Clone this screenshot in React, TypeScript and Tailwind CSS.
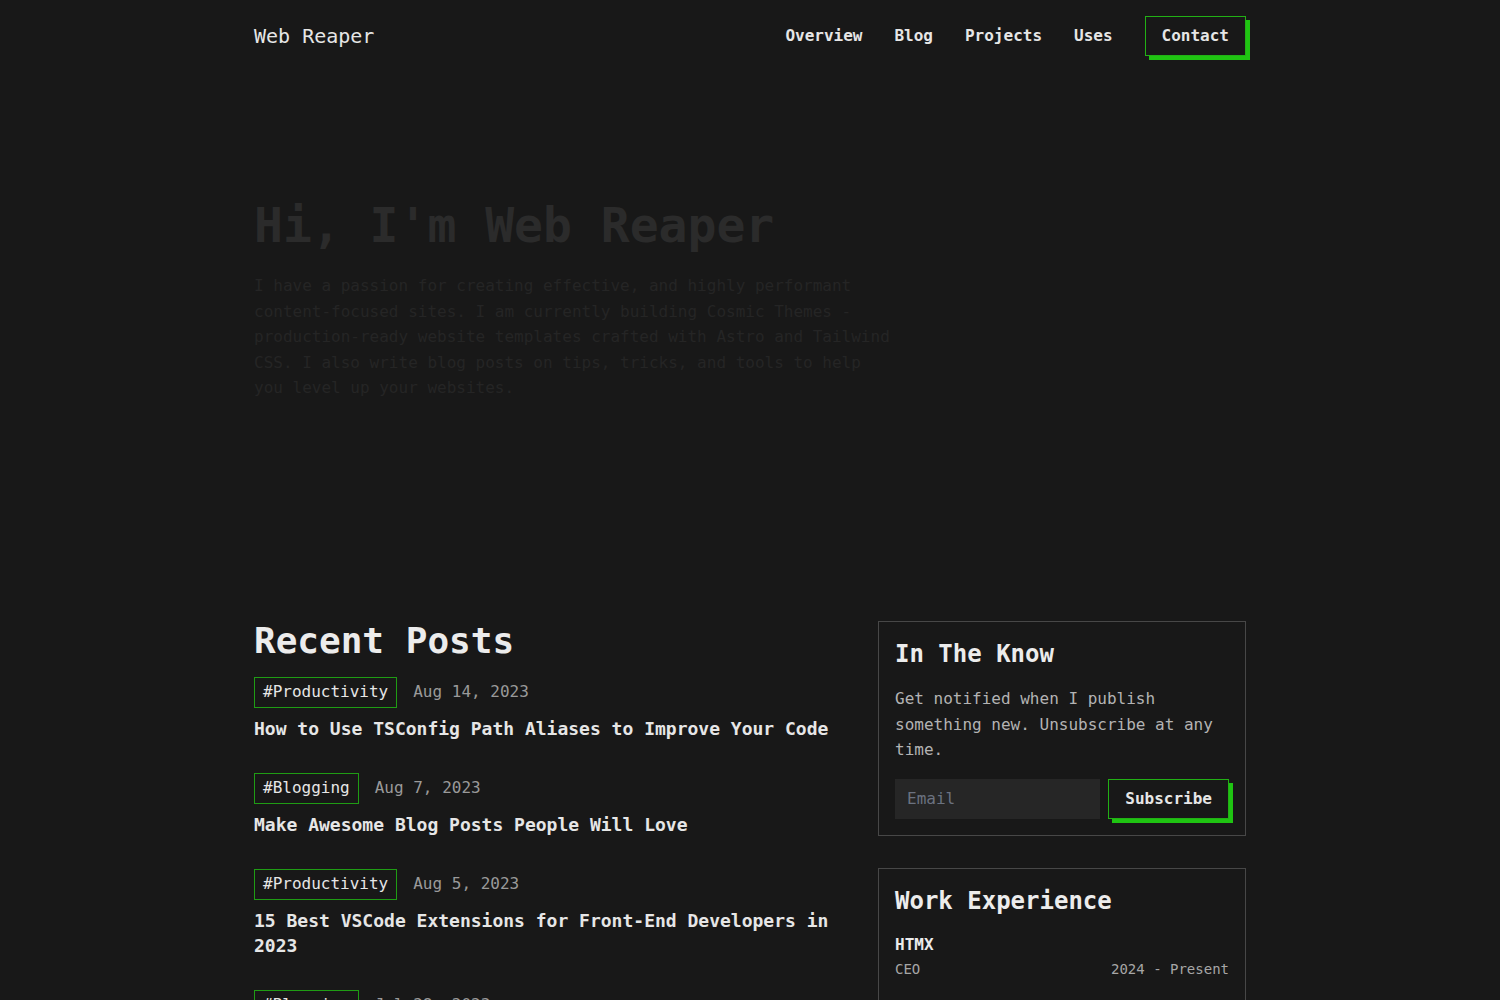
const posts = [
  { tag: "#Productivity", date: "Aug 14, 2023", title: "How to Use TSConfig Path Aliases to Improve Your Code" },
  { tag: "#Blogging", date: "Aug 7, 2023", title: "Make Awesome Blog Posts People Will Love" },
  { tag: "#Productivity", date: "Aug 5, 2023", title: "15 Best VSCode Extensions for Front-End Developers in 2023" },
  { tag: "#Blogging", date: "Jul 28, 2023", title: "Writing Content That Ranks" },
];

const navLinks = ["Overview", "Blog", "Projects", "Uses"];

function Header() {
  return (
    <header className="mx-auto flex h-[72px] max-w-5xl items-center justify-between px-4">
      <a className="text-xl font-medium text-[#e6e6e6]">Web Reaper</a>
      <nav className="flex items-center gap-8">
        {navLinks.map((l) => (
          <a key={l} className="text-base font-semibold text-[#e6e6e6]">
            {l}
          </a>
        ))}
        <a className="flex h-10 items-center border border-[#22b015] px-4 text-base font-semibold text-[#e6e6e6] shadow-[4px_4px_0_0_#1fc412]">
          Contact
        </a>
      </nav>
    </header>
  );
}

function Hero() {
  return (
    <section className="mx-auto max-w-5xl px-4 pb-[220px] pt-[129px]">
      <h1 className="text-5xl leading-none font-bold text-[#2b2b2b]">Hi, I'm Web Reaper</h1>
      <p className="mt-6 max-w-[640px] text-base leading-[1.6] text-[#252525]">
        I have a passion for creating effective, and highly performant content-focused sites. I am currently
        building Cosmic Themes - production-ready website templates crafted with Astro and Tailwind CSS. I also
        write blog posts on tips, tricks, and tools to help you level up your websites.
      </p>
    </section>
  );
}

function RecentPosts() {
  return (
    <div className="min-w-0 flex-1">
      <h2 className="text-4xl leading-10 font-bold text-[#ececec]">Recent Posts</h2>
      <ul className="mt-4 flex flex-col gap-8">
        {posts.map((p) => (
          <li key={p.title}>
            <div className="flex items-center gap-4">
              <span className="flex h-[31px] items-center border border-[#1f9c14] px-2 text-base text-[#e6e6e6]">
                {p.tag}
              </span>
              <span className="text-base text-[#9a9a9a]">{p.date}</span>
            </div>
            <h3 className="mt-2 text-lg leading-[25px] font-semibold text-[#e6e6e6]">{p.title}</h3>
          </li>
        ))}
      </ul>
    </div>
  );
}

function Sidebar() {
  return (
    <aside className="flex w-[368px] shrink-0 flex-col gap-8">
      <div className="border border-[#474747] p-4">
        <h2 className="text-2xl leading-8 font-semibold text-[#ececec]">In The Know</h2>
        <p className="mt-4 text-base leading-[1.6] text-[#b3b3b3]">
          Get notified when I publish something new. Unsubscribe at any time.
        </p>
        <form className="mt-4 flex gap-2">
          <input
            placeholder="Email"
            className="h-10 min-w-0 flex-1 bg-[#262626] px-3 text-base text-[#e6e6e6] outline-none placeholder:text-[#6b7280]"
          />
          <button
            type="button"
            className="flex h-10 items-center border border-[#22b015] px-4 text-base font-semibold text-[#e6e6e6] shadow-[4px_4px_0_0_#1fc412]"
          >
            Subscribe
          </button>
        </form>
      </div>
      <div className="border border-[#474747] p-4">
        <h2 className="text-2xl leading-8 font-semibold text-[#ececec]">Work Experience</h2>
        <div className="mt-4">
          <p className="text-base leading-6 font-semibold text-[#ececec]">HTMX</p>
          <div className="mt-0.5 flex justify-between text-sm leading-5 text-[#a6a6a6]">
            <span>CEO</span>
            <span>2024 - Present</span>
          </div>
        </div>
        <div className="mt-10">
          <p className="text-base leading-6 font-semibold text-[#ececec]">Cosmic Themes</p>
          <div className="mt-0.5 flex justify-between text-sm leading-5 text-[#a6a6a6]">
            <span>Founder</span>
            <span>2023 - 2024</span>
          </div>
        </div>
      </div>
    </aside>
  );
}

export default function App() {
  return (
    <div className="min-h-screen bg-[#181818] font-['DejaVu_Sans_Mono','Liberation_Mono',monospace]">
      <Header />
      <Hero />
      <section className="mx-auto flex max-w-5xl items-start gap-10 px-4 pb-16">
        <RecentPosts />
        <Sidebar />
      </section>
    </div>
  );
}
